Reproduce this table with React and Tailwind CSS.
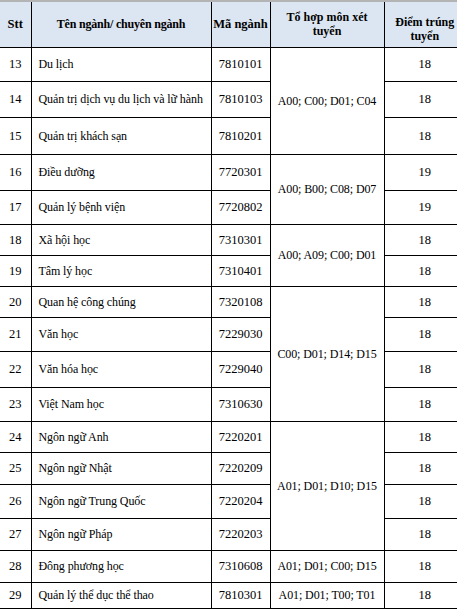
import React from "react";

const rows = [
  { stt: 13, name: "Du lịch", ma: "7810101", h: "h-[34px]", diem: "18", combo: { text: "A00; C00; D01; C04", span: 3 } },
  { stt: 14, name: "Quản trị dịch vụ du lịch và lữ hành", ma: "7810103", h: "h-[36px]", diem: "18" },
  { stt: 15, name: "Quản trị khách sạn", ma: "7810201", h: "h-[37px]", diem: "18" },
  { stt: 16, name: "Điều dưỡng", ma: "7720301", h: "h-[36px]", diem: "19", combo: { text: "A00; B00; C08; D07", span: 2 } },
  { stt: 17, name: "Quản lý bệnh viện", ma: "7720802", h: "h-[34px]", diem: "19" },
  { stt: 18, name: "Xã hội học", ma: "7310301", h: "h-[31px]", diem: "18", combo: { text: "A00; A09; C00; D01", span: 2 } },
  { stt: 19, name: "Tâm lý học", ma: "7310401", h: "h-[31px]", diem: "18" },
  { stt: 20, name: "Quan hệ công chúng", ma: "7320108", h: "h-[31px]", diem: "18", combo: { text: "C00; D01; D14; D15", span: 4 } },
  { stt: 21, name: "Văn học", ma: "7229030", h: "h-[34px]", diem: "18" },
  { stt: 22, name: "Văn hóa học", ma: "7229040", h: "h-[36px]", diem: "18" },
  { stt: 23, name: "Việt Nam học", ma: "7310630", h: "h-[34px]", diem: "18" },
  { stt: 24, name: "Ngôn ngữ Anh", ma: "7220201", h: "h-[31px]", diem: "18", combo: { text: "A01; D01; D10; D15", span: 4 } },
  { stt: 25, name: "Ngôn ngữ Nhật", ma: "7220209", h: "h-[32px]", diem: "18" },
  { stt: 26, name: "Ngôn ngữ Trung Quốc", ma: "7220204", h: "h-[34px]", diem: "18" },
  { stt: 27, name: "Ngôn ngữ Pháp", ma: "7220203", h: "h-[32px]", diem: "18" },
  { stt: 28, name: "Đông phương học", ma: "7310608", h: "h-[32px]", diem: "18", combo: { text: "A01; D01; C00; D15", span: 1 } },
  { stt: 29, name: "Quản lý thể dục thể thao", ma: "7810301", h: "h-[26px]", diem: "18", combo: { text: "A01; D01; T00; T01", span: 1 } },
];

const FF = "font-['Liberation_Serif','Times_New_Roman',serif] leading-[14px] text-black";
const F = `${FF} text-[12.5px]`;
const TH = `${FF} font-bold border-t-2 border-t-[#b4b4b4] border-b border-b-black text-center`;
const TD = `${FF} font-normal border-b border-b-black align-middle`;

export default function App() {
  return (
    <div className={`w-[457px] h-[611px] overflow-hidden bg-white ${F}`}>
      <table className={`table-fixed border-collapse w-[465px] ${F}`}>
        <colgroup>
          <col className="w-[31px]" />
          <col className="w-[180px]" />
          <col className="w-[59px]" />
          <col className="w-[114px]" />
          <col className="w-[81px]" />
        </colgroup>
        <thead>
          <tr className="h-[46px] bg-[#dce6f2]">
            <th className={`${TH} text-[12.5px] border-r border-r-black align-middle p-0`}>Stt</th>
            <th className={`${TH} text-[12px] tracking-[-0.2px] border-r border-r-black align-middle p-0`}>Tên ngành/ chuyên ngành</th>
            <th className={`${TH} text-[12.5px] border-r border-r-black align-middle p-0 whitespace-nowrap`}>Mã ngành</th>
            <th className={`${TH} text-[12px] border-r border-r-black align-top pt-[8px] px-[10px] pb-0`}>Tổ hợp môn xét tuyển</th>
            <th className={`${TH} text-[12px] align-top pt-[13px] pb-0 px-[6px]`}>Điểm trúng tuyển</th>
          </tr>
        </thead>
        <tbody>
          {rows.map((r) => (
            <tr key={r.stt} className={r.h}>
              <td className={`${TD} text-[12.5px] border-r border-r-black text-center p-0`}>{r.stt}</td>
              <td className={`${TD} text-[12px] tracking-[-0.1px] border-r border-r-black text-left py-0 pr-0 pl-[7px] whitespace-nowrap`}>{r.name}</td>
              <td className={`${TD} text-[12.5px] border-r border-r-black text-center p-0`}>{r.ma}</td>
              {r.combo && (
                <td
                  rowSpan={r.combo.span}
                  className={`${TD} text-[12px] tracking-[-0.1px] border-r border-r-black text-center p-0 whitespace-nowrap`}
                >
                  {r.combo.text}
                </td>
              )}
              <td className={`${TD} text-[12.5px] text-center p-0`}>{r.diem}</td>
            </tr>
          ))}
        </tbody>
      </table>
    </div>
  );
}
